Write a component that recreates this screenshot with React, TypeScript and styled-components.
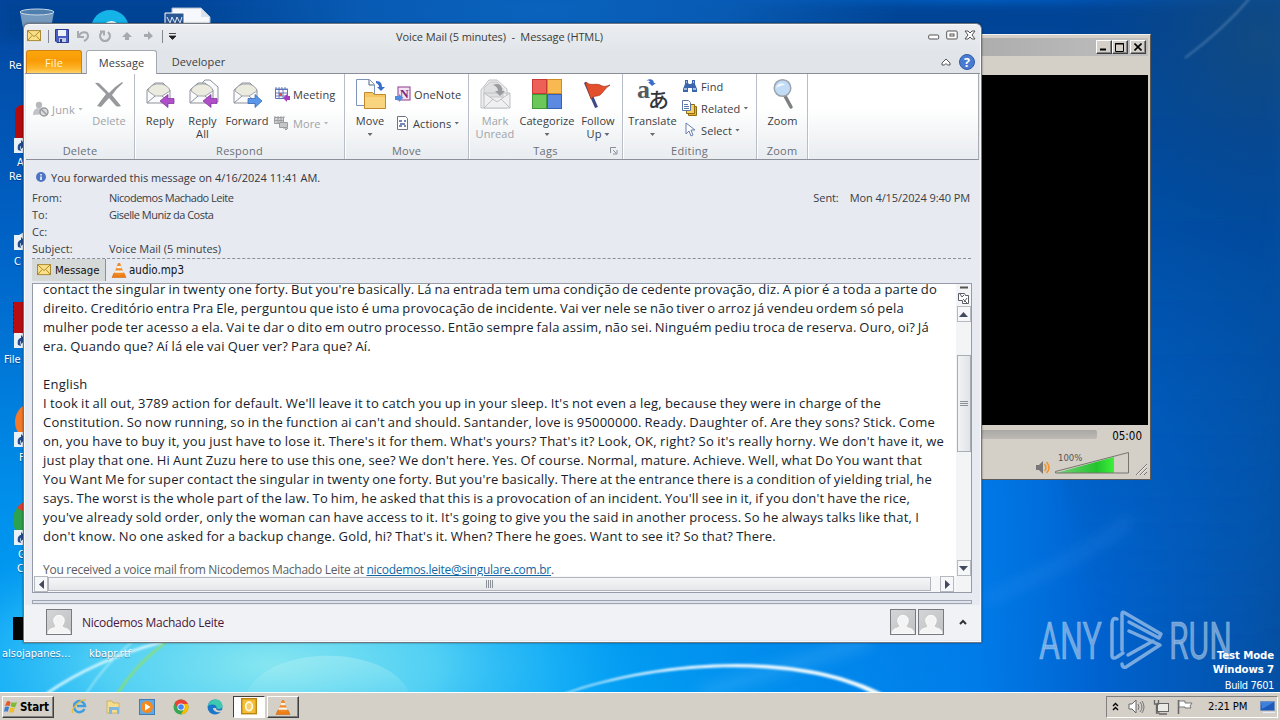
import React from "react";
import styled, { createGlobalStyle, css } from "styled-components";

const Global = createGlobalStyle`
  *{box-sizing:border-box}
  html,body{margin:0;width:1280px;height:720px;overflow:hidden}
  body{font-family:"Open Sans","Noto Sans",sans-serif;font-size:11px;color:#3a3d44;}
  svg{display:block;flex:none}
`;

const Desktop = styled.main`
  position:relative;width:1280px;height:720px;overflow:hidden;background:#0068ce;
  display:flex;flex-direction:column;justify-content:flex-end;
`;
const Wallpaper = styled.svg`position:absolute;inset:0;`;
const DeskItem = styled.div<{ $x: number; $y: number }>`
  position:absolute;left:${p => p.$x}px;top:${p => p.$y}px;white-space:nowrap;
  font:11px/13px "DejaVu Sans Condensed","Liberation Sans",sans-serif;color:#fff;text-shadow:0 1px 1px #0036;
`;
const Watermark = styled.svg`position:absolute;left:1036px;top:606px;`;
const BuildInfo = styled.div`
  position:absolute;right:6px;top:649px;text-align:right;color:#fff;
  font:bold 11.3px/14px "DejaVu Sans Condensed",sans-serif;letter-spacing:-.12px;
  span{display:block;font-weight:400;font-size:11px;line-height:18px;letter-spacing:-.4px}
`;

/* ---------- media player ---------- */
const Player = styled.section`
  position:absolute;left:900px;top:34px;width:251px;height:446px;background:#d4d0c8;padding:3px 2px 3px 3px;
  border:1px solid;border-color:#f4f2ee #5d5b57 #5d5b57 #fff;display:flex;flex-direction:column;
`;
const PlayerTitle = styled.div`
  height:18px;background:linear-gradient(90deg,#a5a5a5,#bfbfbf);display:flex;justify-content:flex-end;align-items:center;padding-right:2px;
`;
const ClassicButton = styled.span<{ $gap?: boolean }>`
  width:16px;height:14px;margin-left:${p => (p.$gap ? 2 : 0)}px;background:#d4d0c8;border:1px solid;border-color:#fff #404040 #404040 #fff;
  box-shadow:inset -1px -1px #858585;display:flex;align-items:center;justify-content:center;
`;
const PlayerMenu = styled.div`height:19px;flex:none;`;
const Screen = styled.div`height:350px;flex:none;background:#000;`;
const SeekRow = styled.div`
  height:22px;display:flex;align-items:center;justify-content:flex-end;padding-right:6px;
  font:11.5px "DejaVu Sans Condensed",sans-serif;color:#000;gap:15px;
`;
const Seek = styled.div`width:190px;height:9px;background:linear-gradient(#aaa8a4,#bebbb6);border-radius:2px;margin-top:-4px;`;
const VolumeRow = styled.div`flex:1;min-height:0;display:flex;justify-content:flex-end;align-items:flex-end;`;

/* ---------- message window ---------- */
const Window = styled.section`
  position:absolute;left:23px;top:23px;width:959px;height:620px;border-radius:6px 6px 0 0;overflow:hidden;
  border:1px solid #6f767f;background:#e7eaf1;box-shadow:inset 0 0 0 1px #f8f9fb,0 0 2px #0008;
  padding:0 2px 2px;display:flex;flex-direction:column;
`;
const TitleBar = styled.header`
  height:26px;flex:none;margin:1px -1px 0;padding:0 0 4px 2px;background:linear-gradient(#ebedf0,#e2e6ea);display:flex;align-items:center;
`;
const QuickAccess = styled.div`width:172px;display:flex;align-items:center;gap:7px;`;
const VLine = styled.i`width:1px;height:13px;background:#85898f;margin:0 -1px 0 0;`;
const Title = styled.h1`
  margin:0;flex:1;font-size:11px;font-weight:400;letter-spacing:-.1px;color:#3b3b3b;padding-left:197px;white-space:nowrap;
`;
const WinButtons = styled.div`display:flex;gap:6px;align-items:center;padding:0 4px 2px 0;`;
const TabRow = styled.nav`
  height:23px;flex:none;margin:0 -1px;background:#e1e5e9;border-bottom:1px solid #8a8f97;display:flex;align-items:flex-end;padding-left:1px;
`;
const Tab = styled.span<{ $kind?: "file" | "active"; $w: number }>`
  width:${p => p.$w}px;height:23px;display:flex;align-items:center;justify-content:center;font-size:11px;letter-spacing:.12px;
  ${p => p.$kind === "file" && css`
    color:#fff4d2;background:linear-gradient(#fba60d,#f99b05 45%,#fdb52a 80%,#ffd267);border:1px solid #d18012;border-bottom:0;border-radius:3px 3px 0 0;margin-right:4px;`}
  ${p => p.$kind === "active" && css`
    background:#fff;border:1px solid #a4a9b0;border-bottom:0;border-radius:3px 3px 0 0;margin-bottom:-1px;height:24px;`}
`;
const TabTools = styled.div`margin-left:auto;display:flex;align-items:center;gap:8px;padding:0 5px 3px 0;`;
const Ribbon = styled.div`
  height:86px;flex:none;background:linear-gradient(#fff 0,#fff 40%,#f5f7f8 65%,#e9ecf0);border-bottom:1px solid #8b9098;
  border-right:1px solid #a9adb4;display:flex;
`;
const Group = styled.div<{ $w: number }>`
  width:${p => p.$w}px;border-right:1px solid #b9bdc5;box-shadow:1px 0 #fff;display:flex;flex-direction:column;flex:none;position:relative;
`;
const Tools = styled.div<{ $pad?: number }>`flex:1;display:flex;padding-left:${p => p.$pad ?? 4}px;`;
const GroupName = styled.div`height:16px;line-height:15px;text-align:center;color:#6a6f78;font-size:11px;letter-spacing:.25px;`;
const Corner = styled.svg`position:absolute;right:4px;bottom:4px;`;
const Big = styled.div<{ $w: number; $off?: boolean }>`
  width:${p => p.$w}px;display:flex;flex-direction:column;align-items:center;padding-top:4px;line-height:13px;letter-spacing:.08px;
  color:${p => (p.$off ? "#a0a3a8" : "#3a3d44")};white-space:nowrap;text-align:center;flex:none;
  svg+span{margin-top:4px}
`;
const Smalls = styled.div<{ $rows: number; $pad?: number }>`
  display:flex;flex-direction:column;padding-top:${p => (p.$rows === 3 ? 1 : 9)}px;gap:${p => (p.$rows === 3 ? 0 : 7)}px;margin-left:${p => p.$pad ?? 4}px;
`;
const Small = styled.div<{ $off?: boolean }>`
  height:22px;display:flex;align-items:center;gap:3px;white-space:nowrap;letter-spacing:.1px;color:${p => (p.$off ? "#a0a3a8" : "#3a3d44")};
`;
const JunkCell = styled.div`
  width:54px;height:22px;margin-top:24px;display:flex;align-items:center;gap:3px;color:#a0a3a8;letter-spacing:.2px;flex:none;
`;
const Arrow = styled.i<{ $off?: boolean; $top?: number }>`
  display:inline-block;width:5px;height:3px;background:${p => (p.$off ? "#b5b8bc" : "#666b73")};clip-path:polygon(0 0,100% 0,50% 100%);
  vertical-align:2px;margin-top:${p => p.$top ?? 0}px;
`;
const InfoBar = styled.div`height:24px;flex:none;margin-top:5px;display:flex;align-items:center;gap:5px;padding-left:10px;font-size:11px;letter-spacing:-.02px;color:#33363d;`;
const Fields = styled.div`padding:0 9px 0 6px;height:69px;flex:none;`;
const Field = styled.div`display:flex;height:17px;line-height:17px;font-size:11px;white-space:pre;
  b{font-weight:400;width:77px}
  em{font-style:normal;margin-left:auto;letter-spacing:-.09px}
  i{font-style:normal;margin-right:11px}
`;
const PersonName = styled.span`letter-spacing:-.5px;`;
const Attachments = styled.div`
  height:25px;flex:none;margin:0 8px 0 6px;border-top:1px dashed #8a919c;display:flex;align-items:flex-start;font:11.5px "DejaVu Sans Condensed",sans-serif;color:#111;
`;
const Attachment = styled.span<{ $on?: boolean }>`
  height:21px;display:flex;align-items:center;gap:2px;padding:0 5px;
  ${p => p.$on && css`height:22px;gap:4px;background:#d5d9d8;border-right:1px solid #8d9196;width:74px;font-size:11.3px;`}
`;
const Reader = styled.div`
  height:310px;flex:none;margin:0 7px 0 6px;border:1px solid #959ca8;background:#fff;display:grid;
  grid-template-columns:1fr 15px;grid-template-rows:1fr 16px;
`;
const Body = styled.article`overflow:hidden;padding-left:10px;color:#171d2b;font-size:13px;letter-spacing:.22px;`;
const Para = styled.div`margin-top:-4px;`;
const Line = styled.div<{ $w?: number }>`
  height:19px;line-height:19px;white-space:nowrap;
  ${p => p.$w && css`width:${p.$w}px;white-space:normal;text-align-last:justify;word-spacing:-3px;`}
`;
const Footer = styled.div`margin-top:15px;line-height:17px;font-size:12px;letter-spacing:-.27px;color:#5a5d62;white-space:nowrap;
  a{color:#1267a3;text-decoration:underline}
`;
const VBar = styled.div`background:#f3f4f6;display:flex;flex-direction:column;align-items:center;`;
const ScrollBtn = styled.span`width:14px;height:16px;flex:none;border:1px solid #b6bac0;background:#f6f7f9;display:flex;align-items:center;justify-content:center;`;
const VThumb = styled.span`
  width:14px;height:97px;margin-top:33px;border:1px solid #a9aeb5;background:linear-gradient(90deg,#f1f3f4,#e1e4e7);
  display:flex;align-items:center;justify-content:center;
`;
const ScrollSpacer = styled.span`flex:1;`;
const HBar = styled.div`background:#f6f7f8;display:flex;align-items:center;padding-left:1px;`;
const HThumb = styled.span`
  width:883px;height:14px;border:1px solid #b1b5bb;background:linear-gradient(#f5f6f7,#e5e7ea);display:flex;align-items:center;justify-content:center;margin-right:9px;
`;
const Splitter = styled.div`height:4px;flex:none;margin:7px 7px 0 6px;border:1px solid #9da3b0;background:#dfe3eb;`;
const People = styled.footer`
  flex:1;background:#f1f2f5;margin:1px -1px 0;padding:0 10px 1px 21px;display:flex;align-items:center;gap:2px;
  font-size:12px;color:#4a1740;
  p{margin:0 auto 0 8px;letter-spacing:-.27px}
`;
const Avatar = styled.span`width:26px;height:26px;border:1px solid #777b80;background:linear-gradient(135deg,#d4d5d6,#bfc1c3);overflow:hidden;display:flex;`;

/* ---------- taskbar ---------- */
const Taskbar = styled.footer`
  position:relative;height:28px;background:#d4d0c8;border-top:1px solid #fff;display:flex;align-items:center;padding:0 2px;
`;
const Start = styled.span`
  width:52px;height:22px;border:1px solid;border-color:#fff #404040 #404040 #fff;box-shadow:inset -1px -1px #808080;display:flex;align-items:center;gap:1px;
  padding-left:1px;font:bold 11.5px "DejaVu Sans Condensed",sans-serif;letter-spacing:-.1px;color:#000;margin-right:8px;
`;
const Launcher = styled.span<{ $mode?: "down" | "up" }>`
  width:${p => (p.$mode ? 32 : 34)}px;height:22px;display:flex;align-items:center;justify-content:center;
  ${p => p.$mode === "down" && css`background:#fff;border:1px solid;border-color:#404040 #fff #fff #404040;margin:0 2px 0 1px;`}
  ${p => p.$mode === "up" && css`border:1px solid;border-color:#fff #404040 #404040 #fff;box-shadow:inset -1px -1px #808080;`}
`;
const Tray = styled.div`
  margin-left:auto;width:172px;height:22px;border:1px solid;border-color:#808080 #fff #fff #808080;display:flex;align-items:center;padding:0 1px 0 5px;gap:8px;
  font:11.2px "DejaVu Sans Condensed",sans-serif;color:#000;letter-spacing:-.2px;
  svg:first-child{margin-right:1px} time{margin:0 auto 0 7px}
`;

/* ---------- drawings ---------- */
const Env = ({ s = 14 }: { s?: number }) => (
  <svg width={s} height={s * 0.8} viewBox="0 0 14 11"><rect x=".5" y=".5" width="13" height="10" fill="#fbe08a" stroke="#a98a35" /><path d="M1 1l6 5.5L13 1M1 10l4-4.5M13 10L9 5.500" fill="none" stroke="#b08a28" /></svg>
);
const OpenMail = ({ kind }: { kind: "reply" | "all" | "fwd" | "unread" }) => {
  const un = kind === "unread";
  const st = un ? "#bfc0c3" : "#8d929b";
  return (
    <svg width="32" height="32" viewBox="0 0 32 32">
      {(kind === "all") && <path d="M12 10V8l6-6h5l8 7v15h-5" fill="#fafbfc" stroke={st} />}
      <path d={un ? "M2 12L10 2h8l10 9v19H2z" : kind === "all" ? "M3 12L11 5h7l8 7v13H3z" : "M3 12L11 5h8l7 7v13H3z"} fill={un ? "#eeeeef" : "#fafbfd"} stroke={st} />
      <path d={un ? "M5 10l6-6h7l6 7v8H5z" : "M4 13q1-5 8-7h6q7 2 8 7l-8 5h-7z"} fill={un ? "#e0e0e2" : "#ecebe0"} stroke={st} strokeWidth=".8" />
      <path d={un ? "M5 15h26v15H5zM5 15l13 9 13-9M5 30l9-9M31 30l-9-9" : "M3 25l8-7M26 25l-8-7"} fill={un ? "#f0f0f1" : "none"} stroke={st} />
      {un && <path d="M14 7c6-3 10 1 9 6h3l-5 5-5-5h3c0-3-2-5-5-6z" fill="#9a9b9e" />}
      {kind === "fwd" && <path d="M17 20.500h7v-4l7 6.500-7 6.500v-4h-7z" fill="#5a97ea" stroke="#2d62b5" strokeWidth=".7" />}
      {(kind === "reply" || kind === "all") && <path d="M30 20.500h-6v-4L16 23l8 6.500v-4h6z" fill="#ae4fc9" stroke="#7c2b98" strokeWidth=".7" />}
    </svg>
  );
};
const XIcon = () => <svg width="32" height="32" viewBox="0 0 32 32"><path d="M2 5q3-1 5 1l9 9Q21 9 29 4l1 1q-6 5-11 12l9 11q-3 1-5 0l-7-8-8 9-4-1 9-12z" fill="#97999c" /></svg>;
const MoveIcon = () => (
  <svg width="32" height="32" viewBox="0 0 32 32"><path d="M2.500 1.500h13l5 5v21h-18z" fill="#fcfdff" stroke="#7e95b8" /><path d="M15 2v5h5" fill="none" stroke="#55667f" />
    <path d="M10.500 14.500h8l2 2h11v14h-21z" fill="#f4c764" stroke="#c08a2c" /><path d="M11 19h20v11H11z" fill="#f9d580" />
    <path d="M22 3c5 0 6 3 6 6h3l-4 4-4-4h2c0-2-1-3-3-4z" fill="#3b6ecb" /></svg>
);
const CatIcon = () => (
  <svg width="32" height="32" viewBox="0 0 32 32"><g strokeWidth="1"><rect x="1.500" y="1.500" width="14" height="14" fill="#ee5f57" stroke="#c73a35" /><rect x="16.500" y="1.500" width="14" height="14" fill="#f8b951" stroke="#cf8a26" />
    <rect x="1.500" y="16.500" width="14" height="14" fill="#6bc75a" stroke="#3f9a37" /><rect x="16.500" y="16.500" width="14" height="14" fill="#5b8ae0" stroke="#3560b5" /></g></svg>
);
const FlagIcon = () => (
  <svg width="32" height="32" viewBox="0 0 32 32"><path d="M2 5l3-1 11 25-3 1z" fill="#3d4a86" /><path d="M3 4c7 5 11 0 17 4 3 1 5 0 8-1-6 4-6 7-10 10-4 2-6 0-9 4z" fill="#e2502d" stroke="#a9341b" strokeWidth=".7" /></svg>
);
const TransIcon = () => (
  <svg width="32" height="32" viewBox="0 0 32 32" overflow="visible"><text x="0" y="20" fontFamily="Liberation Serif,serif" fontWeight="700" fontSize="26" fill="#555a61">a</text>
    <text x="11" y="29" fontFamily="Noto Sans CJK JP,sans-serif" fontWeight="500" fontSize="21" fill="#33363b">あ</text>
    <path d="M9 3c3-3 8-2 8 2h2l-4 3-4-4h2c0-1-2-2-4-1z" fill="#3b6ecb" /></svg>
);
const ZoomIcon = () => (
  <svg width="32" height="32" viewBox="0 0 32 32"><path d="M18 18l6 11" stroke="#7e7f82" strokeWidth="3.500" strokeLinecap="round" /><circle cx="15.500" cy="10" r="8.300" fill="#c3dcf5" stroke="#9aa2ad" strokeWidth="1.500" /><path d="M9 10c1-4 6-6 9-3-4 0-7 2-9 3z" fill="#f4faff" /></svg>
);
const Cone = ({ s = 16 }: { s?: number }) => (
  <svg width={s} height={s} viewBox="0 0 16 16"><path d="M1 15.500l2-4.500h10l2 4.500z" fill="#ee7d15" stroke="#c55e06" strokeWidth=".5" /><path d="M7 1h2l4 11c-2 1.500-8 1.500-10 0z" fill="#f08a24" /><path d="M6 4h4l.8 2.200H5.200zM4.300 8.500h7.400l.8 2.200h-9z" fill="#f2f2f0" /></svg>
);
const Tri = ({ d }: { d: "u" | "d" | "l" | "r" }) => (
  <svg width="9" height="9" viewBox="0 0 9 9"><path d={{ u: "M0 7l4.500-5L9 7z", d: "M0 2l4.500 5L9 2z", l: "M7 0L2 4.500 7 9z", r: "M2 0l5 4.500L2 9z" }[d]} fill="#434a60" /></svg>
);
const Person = () => (
  <Avatar><svg width="24" height="24" viewBox="0 0 24 24"><path d="M1 24c0-5 3-5 7-6.500 1-.5 1-2 0-3-2-3-2-9 4-9s6 6 4 9c-1 1-1 2.500 0 3 4 1.500 7 1.500 7 6.500z" fill="#f4f4f4" stroke="#fff" /></svg></Avatar>
);
const Shortcut = () => <g><rect x="14" y="0" width="15" height="15" fill="#e9f1f8" /><path d="M18 12c-1-5 1-7 3-7V2l5 5-5 4V8c-1 0-1 2 0 5z" fill="#214a8f" /></g>;

const lines: [string, number?][] = [
  ["contact the singular in twenty one forty. But you're basically. Lá na entrada tem uma condição de cedente provação, diz. A pior é a toda a parte do", 894],
  ["direito. Creditório entra Pra Ele, perguntou que isto é uma provocação de incidente. Vai ver nele se não tiver o arroz já vendeu ordem só pela", 861],
  ["mulher pode ter acesso a ela. Vai te dar o dito em outro processo. Então sempre fala assim, não sei. Ninguém pediu troca de reserva. Ouro, oi? Já", 886],
  ["era. Quando que? Aí lá ele vai Quer ver? Para que? Aí.", 328],
  [""],
  ["English"],
  ["I took it all out, 3789 action for default. We'll leave it to catch you up in your sleep. It's not even a leg, because they were in charge of the", 838],
  ["Constitution. So now running, so in the function ai can't and should. Santander, love is 95000000. Ready. Daughter of. Are they sons? Stick. Come", 892],
  ["on, you have to buy it, you just have to lose it. There's it for them. What's yours? That's it? Look, OK, right? So it's really horny. We don't have it, we", 901],
  ["just play that one. Hi Aunt Zuzu here to use this one, see? We don't here. Yes. Of course. Normal, mature. Achieve. Well, what Do You want that", 879],
  ["You Want Me for super contact the singular in twenty one forty. But you're basically. There at the entrance there is a condition of yielding trial, he", 889],
  ["says. The worst is the whole part of the law. To him, he asked that this is a provocation of an incident. You'll see in it, if you don't have the rice,", 867],
  ["you've already sold order, only the woman can have access to it. It's going to give you the said in another process. So he always talks like that, I", 876],
  ["don't know. No one asked for a backup change. Gold, hi? That's it. When? There he goes. Want to see it? So that? There.", 733],
];

const Scene = () => (
  <Wallpaper width="1280" height="720" viewBox="0 0 1280 720">
    <defs>
      <linearGradient id="base" x1="0" y1="0" x2="0" y2="1"><stop offset="0" stopColor="#0346a0" /><stop offset=".35" stopColor="#0064c8" /><stop offset=".7" stopColor="#0090ec" /><stop offset="1" stopColor="#02a6f6" /></linearGradient>
      <linearGradient id="right" x1="0" y1="0" x2="1" y2="0"><stop offset=".45" stopColor="#0072e4" stopOpacity="0" /><stop offset=".76" stopColor="#0078e8" stopOpacity=".9" /><stop offset=".86" stopColor="#0062cf" /><stop offset="1" stopColor="#0450a4" /></linearGradient>
      <linearGradient id="top" x1="0" y1="0" x2="0" y2="1"><stop offset="0" stopColor="#024394" /><stop offset=".35" stopColor="#00489a" stopOpacity=".75" /><stop offset="1" stopColor="#0060c0" stopOpacity="0" /></linearGradient>
      <radialGradient id="corner"><stop offset="0" stopColor="#164c7e" stopOpacity=".8" /><stop offset="1" stopColor="#0a4688" stopOpacity="0" /></radialGradient>
      <radialGradient id="mid"><stop offset="0" stopColor="#0a63bd" /><stop offset=".5" stopColor="#0a60ba" stopOpacity=".8" /><stop offset="1" stopColor="#0a63bd" stopOpacity="0" /></radialGradient>
      <radialGradient id="glow"><stop offset="0" stopColor="#86e6f0" /><stop offset=".45" stopColor="#55d2f4" stopOpacity=".95" /><stop offset=".75" stopColor="#2cbcf8" stopOpacity=".6" /><stop offset="1" stopColor="#14a4f6" stopOpacity="0" /></radialGradient>
      <linearGradient id="dome" x1="0" y1="0" x2="0" y2="1"><stop offset="0" stopColor="#b9f2f4" stopOpacity=".4" /><stop offset="1" stopColor="#b9f2f4" stopOpacity=".1" /></linearGradient>
      <filter id="soft"><feGaussianBlur stdDeviation=".8" /></filter>
      <filter id="haze" x="-50%" y="-50%" width="200%" height="200%"><feGaussianBlur stdDeviation="7" /></filter>
    </defs>
    <rect width="1280" height="720" fill="url(#base)" />
    <rect width="1280" height="720" fill="url(#right)" />
    <path d="M0 0H1280V640H1100L960 60 0 40z" fill="url(#top)" filter="url(#haze)" />
    <ellipse cx="1260" cy="40" rx="200" ry="200" fill="url(#corner)" />
    <ellipse cx="540" cy="10" rx="360" ry="90" fill="url(#mid)" />
    <ellipse cx="270" cy="665" rx="370" ry="150" fill="url(#glow)" />
    <path d="M246 694C268 643 388 643 410 694z" fill="url(#dome)" />
    <path d="M700 694L870 640" stroke="#6cc4fb" strokeOpacity=".25" strokeWidth="12" filter="url(#haze)" />
    <path d="M985 600Q1080 560 1130 520" stroke="#4aa6f4" strokeOpacity=".2" strokeWidth="10" fill="none" filter="url(#haze)" />
    <g fill="none" filter="url(#soft)">
      <path d="M46 694Q95 660 162 642" stroke="#d6f7ff" strokeWidth="2.500" />
      <path d="M86 694Q105 664 132 642" stroke="#b4f0fb" strokeWidth="1.300" />
      <path d="M117 694Q136 664 166 642" stroke="#93e05a" strokeWidth="2" />
      <path d="M1185 58Q1225 28 1250 -2" stroke="#6b96c0" strokeOpacity=".5" strokeWidth="2" />
    </g>
    <path d="M562 694C660 658 800 650 884 694L873 694C800 656 660 661 566 694z" fill="#f2fbff" filter="url(#soft)" />
    <path d="M20 12q17-5 34 0l-3 16H23z" fill="#8ba9c6" fillOpacity=".85" /><ellipse cx="37" cy="12" rx="17" ry="3" fill="#4e7fae" stroke="#c9d9e7" />
    <circle cx="110" cy="29" r="19" fill="#14b3e8" /><path d="M104 24q8-6 14 0z" fill="#fff" />
    <path d="M172 8h29l9 9v12h-38z" fill="#f6f8fb" stroke="#a9b9cf" /><path d="M201 8v9h9" fill="#d9e1ec" /><path d="M165 13h19v12h-19z" fill="#2c5693" stroke="#fff" /><path d="M167 17l3 6 2-6 3 6 2-6 3 6 2-6" stroke="#dce8f7" fill="none" />
    <rect x="15" y="105" width="30" height="46" rx="7" fill="#b30b0b" />
    <g transform="translate(0 138)"><Shortcut /></g>
    <path d="M14 238l20-12v10z" fill="#e7e7ea" /><g transform="translate(0 235)"><Shortcut /></g>
    <path d="M13 302h20v32H13z" fill="#b80e12" /><path d="M13.500 302v32" stroke="#7b0c0c" strokeDasharray="2 2" /><g transform="translate(0 333)"><Shortcut /></g>
    <circle cx="35" cy="422" r="20" fill="#f47a2a" /><g transform="translate(0 432)"><Shortcut /></g>
    <circle cx="33" cy="520" r="20" fill="#2da14b" /><path d="M17 508a20 20 0 0 1 16-8v16z" fill="#e33b2e" /><g transform="translate(0 530)"><Shortcut /></g>
    <rect x="13" y="617" width="20" height="23" fill="#050505" />
  </Wallpaper>
);

const Logo = () => (
  <Watermark width="200" height="72" viewBox="0 0 200 72" fill="#cfe0f3" fillOpacity=".55">
    <text x="3" y="53" fontFamily="Roboto,sans-serif" fontSize="51" textLength="63" lengthAdjust="spacingAndGlyphs" stroke="#cfe0f3" strokeOpacity=".3">ANY</text>
    <text x="133" y="53" fontFamily="Roboto,sans-serif" fontSize="51" textLength="63" lengthAdjust="spacingAndGlyphs" stroke="#cfe0f3" strokeOpacity=".3">RUN</text>
    <g fill="none" stroke="#cfe0f3" strokeOpacity=".58" strokeWidth="3.500" strokeLinejoin="round" strokeLinecap="round">
      <path d="M81 13Q76 11 76 18V49Q76 54 81 51L87 47" /><path d="M86 44V8Q86 5 89 7L125 28 123 32 93 16" /><path d="M93 25L124 39 90 61Q86 62 86 58M92 49L117 35" />
    </g>
  </Watermark>
);

const MediaPlayer = () => (
  <Player>
    <PlayerTitle>
      <ClassicButton><svg width="8" height="8"><path d="M0 6.500h6" stroke="#000" strokeWidth="2" /></svg></ClassicButton>
      <ClassicButton><svg width="10" height="9"><path d="M.5.500h8v8h-8zM0 1h9" fill="none" stroke="#000" /></svg></ClassicButton>
      <ClassicButton $gap><svg width="8" height="8"><path d="M.5.500l7 7M7.500.500l-7 7" stroke="#000" strokeWidth="1.600" /></svg></ClassicButton>
    </PlayerTitle>
    <PlayerMenu />
    <Screen />
    <SeekRow><Seek />05:00</SeekRow>
    <VolumeRow>
      <svg width="114" height="28" viewBox="0 4 114 28">
        <path d="M2 21h3l4-4v13l-4-4H2z" fill="#777" /><path d="M10.500 20q3 4 0 7M12.500 18q5 6 0 11" fill="none" stroke="#f29427" strokeWidth="1.500" />
        <defs><linearGradient id="vol"><stop offset="0" stopColor="#7ad07b" /><stop offset=".7" stopColor="#22c42e" /><stop offset="1" stopColor="#3ef03a" /></linearGradient></defs>
        <path d="M22 29L80 13v16H22z" fill="url(#vol)" /><path d="M21.500 27.500L94.500 8.500v20.500h-73z" fill="none" stroke="#77746f" />
        <text x="24" y="17" fontFamily="DejaVu Sans Condensed,sans-serif" fontSize="9.500" fill="#555">100%</text>
        <path d="M102 31l11-11M106 31l7-7M110 31l3-3" stroke="#777" /><path d="M103 31l10-10M107 31l6-6" stroke="#fff" strokeWidth=".6" />
      </svg>
    </VolumeRow>
  </Player>
);

const RibbonBar = () => (
  <Ribbon>
    <Group $w={109}>
      <Tools $pad={7}>
        <JunkCell>
          <svg width="16" height="16" viewBox="0 0 16 16"><circle cx="6" cy="4" r="3.200" fill="#b6b8bb" /><path d="M0 14q0-7 6-7t7 6z" fill="#c1c3c6" /><circle cx="11" cy="11" r="4" fill="#dcdddf" stroke="#999ba0" strokeWidth="1.500" /><path d="M8 8l6 6" stroke="#999ba0" strokeWidth="1.500" /></svg>
          Junk <Arrow $off />
        </JunkCell>
        <Big $w={44} $off><XIcon /><span>Delete</span></Big>
      </Tools>
      <GroupName>Delete</GroupName>
    </Group>
    <Group $w={210}>
      <Tools>
        <Big $w={42}><OpenMail kind="reply" /><span>Reply</span></Big>
        <Big $w={43}><OpenMail kind="all" /><span>Reply<br />All</span></Big>
        <Big $w={46}><OpenMail kind="fwd" /><span>Forward</span></Big>
        <Smalls $rows={2}>
          <Small><svg width="16" height="16" viewBox="0 0 16 16"><path d="M1.500 3.500h12v9h-12z" fill="#fff" stroke="#5a73b8" /><path d="M1 3h13M2 1v3M5 1v3M8 1v3M11 1v3M2 7h11M2 10h11M5 4v8M9 4v8" stroke="#5a73b8" strokeWidth=".9" /><rect x="5" y="7" width="3" height="3" fill="#d94f4f" /><path d="M16 10h-3V8l-4 4 4 4v-2h3z" fill="#a43cc2" /></svg>Meeting</Small>
          <Small $off><svg width="16" height="16" viewBox="0 0 16 16"><path d="M.5 2.500h9v6h-9z" fill="#d0d2d5" stroke="#9b9da1" /><path d="M1 1v2M4 1v2M7 1v2M10 1v2M1 5.500h8M4 3v5M7 3v5" stroke="#9b9da1" /><path d="M5.500 7.500h8v5h-8z" fill="#c4c6c9" stroke="#9b9da1" /><path d="M9 13h3v2M11 14l1 1 2-2" fill="none" stroke="#9b9da1" /></svg>More <Arrow $off /></Small>
        </Smalls>
      </Tools>
      <GroupName>Respond</GroupName>
    </Group>
    <Group $w={124}>
      <Tools>
        <Big $w={42}><MoveIcon /><span>Move</span><Arrow $top={6} /></Big>
        <Smalls $rows={2}>
          <Small><svg width="16" height="16" viewBox="0 0 16 16"><rect x="3" y="1" width="12" height="13" fill="#f3e3f3" stroke="#8c3a8e" /><text x="5" y="12" fontFamily="Liberation Serif,serif" fontWeight="700" fontSize="12" fill="#7c2480">N</text><path d="M0 10h4V8l4 4-4 4v-2H0z" fill="#4f8de0" /></svg>OneNote</Small>
          <Small><svg width="15" height="16" viewBox="0 0 15 16"><path d="M2.500 1.500h8l2 2v11h-10z" fill="#fff" stroke="#6b7385" /><path d="M4 6h3M4 11h3M9 6h2M9 11h2M5 9h5" stroke="#4b62a0" strokeWidth="1.500" /></svg>Actions <Arrow /></Small>
        </Smalls>
      </Tools>
      <GroupName>Move</GroupName>
    </Group>
    <Group $w={154}>
      <Tools>
        <Big $w={44} $off><OpenMail kind="unread" /><span>Mark<br />Unread</span></Big>
        <Big $w={60}><CatIcon /><span>Categorize</span><Arrow $top={6} /></Big>
        <Big $w={42}><FlagIcon /><span>Follow<br />Up <Arrow /></span></Big>
      </Tools>
      <GroupName>Tags</GroupName>
      <Corner width="8" height="8" viewBox="0 0 8 8"><path d="M.5 6V.500H6M3 3l3 3M7 3v4H3" fill="none" stroke="#8b9098" /></Corner>
    </Group>
    <Group $w={134}>
      <Tools>
        <Big $w={51}><TransIcon /><span>Translate</span><Arrow $top={6} /></Big>
        <Smalls $rows={3}>
          <Small><svg width="16" height="16" viewBox="0 0 16 16"><path d="M3 2h3v3l1 1h2l1-1V2h3v4l2 5v3h-5v-4H6v4H1v-3l2-5z" fill="#3b66ae" /><path d="M2 11h3M11 11h3M4 4h1M11 4h1" stroke="#c5d8f2" strokeWidth="1.500" /></svg>Find</Small>
          <Small><svg width="16" height="16" viewBox="0 0 16 16"><path d="M6.500 6.500h8v9h-8z" fill="#e8b02e" stroke="#8e6a12" /><path d="M4.500 4.500h8v9h-8z" fill="#f6cf62" stroke="#8e6a12" /><path d="M.5.500h6l2 2v8h-8z" fill="#fff" stroke="#5f78ab" /><path d="M2 4.500h4M2 6.500h5M2 8.500h5" stroke="#5f78ab" /></svg>Related <Arrow /></Small>
          <Small><svg width="16" height="16" viewBox="0 0 16 16"><path d="M4 1v11l3-3 2 5 2-1-2-5h4z" fill="#fff" stroke="#6a7fae" /></svg>Select <Arrow /></Small>
        </Smalls>
      </Tools>
      <GroupName>Editing</GroupName>
    </Group>
    <Group $w={51}>
      <Tools $pad={3}><Big $w={45}><ZoomIcon /><span>Zoom</span></Big></Tools>
      <GroupName>Zoom</GroupName>
    </Group>
  </Ribbon>
);

const MessageWindow = () => (
  <Window>
    <TitleBar>
      <QuickAccess>
        <Env /><VLine />
        <svg width="14" height="14" viewBox="0 0 14 14"><path d="M.5.500h13v13H2l-1.500-1.500z" fill="#4a5fc0" stroke="#2c3b8c" /><path d="M3 1h8v6H3z" fill="#eef2fb" /><path d="M4 9h7v4H4z" fill="#c3cbe6" /><path d="M5 10h2v3H5z" fill="#2c3b8c" /></svg>
        <svg width="15" height="14" viewBox="0 0 15 14"><path d="M2 2v6h6M3 7c2-5 9-5 9 0 0 3-2 4-4 5" fill="none" stroke="#a7aaae" strokeWidth="2" /></svg>
        <svg width="15" height="14" viewBox="0 0 15 14"><path d="M4 3c-4 4-1 9 3 9s7-5 3-9M2 2.500h4v4" fill="none" stroke="#a7aaae" strokeWidth="2" /></svg>
        <svg width="14" height="14" viewBox="0 0 14 14"><path d="M7 3l5 5H9v3H5V8H2z" fill="#a7aaae" /></svg>
        <svg width="14" height="14" viewBox="0 0 14 14"><path d="M12 7L7 2v3H3v3h4v3z" fill="#a7aaae" /></svg>
        <VLine /><svg width="7" height="8" viewBox="0 0 7 8"><path d="M0 1.500h7M0 4h7L3.500 7.500z" fill="#222" stroke="#222" strokeWidth=".8" /></svg>
      </QuickAccess>
      <Title>Voice Mail (5 minutes) &nbsp;-&nbsp; Message (HTML)</Title>
      <WinButtons>
        <svg width="12" height="12" viewBox="0 0 12 12"><rect x=".7" y="6" width="10" height="4" rx="1" fill="#fff" stroke="#555" /></svg>
        <svg width="12" height="12" viewBox="0 0 12 12"><rect x=".7" y="2" width="10.500" height="8" rx="1" fill="#fff" stroke="#555" /><rect x="4" y="5" width="4" height="2" fill="none" stroke="#555" /></svg>
        <svg width="12" height="12" viewBox="0 0 12 12"><path d="M1 2h3l2 2 2-2h3L8 6l3 4H8L6 8l-2 2H1l3-4z" fill="#fff" stroke="#555" /></svg>
      </WinButtons>
    </TitleBar>
    <TabRow>
      <Tab $kind="file" $w={56}>File</Tab><Tab $kind="active" $w={71}>Message</Tab><Tab $w={83}>Developer</Tab>
      <TabTools>
        <svg width="10" height="8" viewBox="0 0 10 8"><path d="M1 5l4-4 4 4v2H6.500L5 5.500 3.500 7H1z" fill="#fff" stroke="#555" /></svg>
        <svg width="16" height="16" viewBox="0 0 16 16"><circle cx="8" cy="8" r="7.500" fill="#4a7bd0" stroke="#2f5cac" /><text x="8" y="12.500" textAnchor="middle" fontFamily="Open Sans,sans-serif" fontSize="12.500" fontWeight="700" fill="#fff">?</text></svg>
      </TabTools>
    </TabRow>
    <RibbonBar />
    <InfoBar><svg width="10" height="10" viewBox="0 0 10 10"><circle cx="5" cy="5" r="5" fill="#4b74c4" /><path d="M5 2v1.500M5 4.500v3.500" stroke="#fff" strokeWidth="1.500" /></svg>You forwarded this message on 4/16/2024 11:41 AM.</InfoBar>
    <Fields>
      <Field><b>From:</b><PersonName>Nicodemos Machado Leite</PersonName><em><i>Sent:</i>Mon 4/15/2024 9:40 PM</em></Field>
      <Field><b>To:</b><PersonName>Giselle Muniz da Costa</PersonName></Field>
      <Field><b>Cc:</b></Field>
      <Field><b>Subject:</b>Voice Mail (5 minutes)</Field>
    </Fields>
    <Attachments>
      <Attachment $on><Env />Message</Attachment>
      <Attachment><Cone />audio.mp3</Attachment>
    </Attachments>
    <Reader>
      <Body>
        <Para>{lines.map(([t, w], i) => <Line key={i} $w={w}>{t}</Line>)}</Para>
        <Footer>You received a voice mail from Nicodemos Machado Leite at <a>nicodemos.leite@singulare.com.br</a>.</Footer>
      </Body>
      <VBar>
        <svg width="13" height="22" viewBox="0 0 13 22"><path d="M3 3.500h8" stroke="#555" strokeWidth="2" /><path d="M1.500 9.500h6l1 2h3v8h-6v-3h-4zM3 10l2 3 2-2M6 15l4 4M10 14l-3 4" fill="#fff" stroke="#5a5d66" /></svg>
        <ScrollBtn><Tri d="u" /></ScrollBtn>
        <VThumb><svg width="8" height="8"><path d="M0 1.500h8M0 3.500h8M0 5.500h8" stroke="#80858c" strokeWidth=".9" /></svg></VThumb>
        <ScrollSpacer /><ScrollBtn><Tri d="d" /></ScrollBtn>
      </VBar>
      <HBar>
        <ScrollBtn><Tri d="l" /></ScrollBtn>
        <HThumb><svg width="8" height="8"><path d="M.5 0v8M2.500 0v8M4.500 0v8M6.500 0v8" stroke="#80858c" strokeWidth=".9" /></svg></HThumb>
        <ScrollBtn><Tri d="r" /></ScrollBtn>
      </HBar>
      <VBar />
    </Reader>
    <Splitter />
    <People>
      <Person /><p>Nicodemos Machado Leite</p><Person /><Person />
      <svg width="24" height="8" viewBox="0 0 24 8"><path d="M14 6l3-3 3 3" fill="none" stroke="#333" strokeWidth="2" /></svg>
    </People>
  </Window>
);

const TaskBar = () => (
  <Taskbar>
    <Start><svg width="15" height="16" viewBox="1 0 16 16"><path d="M4 2q2-1 4 1L7 7Q4 6 2 7z" fill="#e4582a" /><path d="M9 3q3 1 6 0l-2 5q-2 1-5-1z" fill="#7dbb35" /><path d="M2 8q2-1 4.500 0L5 13q-2-1-4 0z" fill="#3c7fd0" /><path d="M7.500 8.500q3 1 5 0l-1 5q-3 1-5 0z" fill="#f4bc2a" /></svg>Start</Start>
    <Launcher><svg width="17" height="17" viewBox="0 0 17 17"><path d="M13.500 11a5.500 5.500 0 1 1 .5-3H6" fill="none" stroke="#3d9fdf" strokeWidth="2.500" /><path d="M2 15C-1 12 9 1 15 2" fill="none" stroke="#e9bb3c" strokeWidth="1.300" /></svg></Launcher>
    <Launcher><svg width="17" height="16" viewBox="0 0 17 16"><path d="M2 2h5l1 2h6v10H2z" fill="#f4dd8d" stroke="#c9a548" strokeWidth=".7" /><path d="M4 8h10v7h-2v-4H7v4H4z" fill="#7db7e2" /></svg></Launcher>
    <Launcher><svg width="16" height="16" viewBox="0 0 16 16"><rect x=".5" y=".5" width="15" height="15" fill="#68a7dc" stroke="#3e7db8" /><circle cx="8" cy="8" r="6" fill="#f58a1f" /><path d="M6 4.500l5.500 3.500L6 11.500z" fill="#fff" /></svg></Launcher>
    <Launcher><svg width="16" height="16" viewBox="0 0 16 16"><circle cx="8" cy="8" r="7.500" fill="#34a853" /><path d="M1.500 4.200A7.500 7.500 0 0 1 14.800 5H8L5 9.500z" fill="#ea4335" /><path d="M14.900 5A7.500 7.500 0 0 1 8 15.500L11.300 9.500 10.500 5z" fill="#fbbc05" /><circle cx="8" cy="8" r="3.600" fill="#fff" /><circle cx="8" cy="8" r="2.800" fill="#4285f4" /></svg></Launcher>
    <Launcher><svg width="16" height="16" viewBox="0 0 16 16"><circle cx="8" cy="8" r="7.500" fill="#1a76c9" /><path d="M1 7c1-8 14-9 14.500 0 0 3-4 4-6 2 1-3-4-5-8.500-2z" fill="#3cc9b0" /><path d="M9 9c0 3 4 3 6 2l-1 2c-4 1-8-1-8-4z" fill="#d4d0c8" /></svg></Launcher>
    <Launcher $mode="down"><svg width="16" height="17" viewBox="0 0 16 17"><rect x=".7" y=".7" width="14.600" height="15" fill="#f4bd36" stroke="#bd8412" strokeWidth="1.400" /><ellipse cx="8" cy="8.300" rx="3.300" ry="4.300" fill="#f7cf62" stroke="#fff8df" strokeWidth="1.800" /></svg></Launcher>
    <Launcher $mode="up"><Cone /></Launcher>
    <Tray>
      <svg width="7" height="10" viewBox="0 0 7 10"><path d="M1 4l2.500-2.500L6 4M1 8l2.500-2.500L6 8" fill="none" stroke="#000" strokeWidth="1.400" /></svg>
      <svg width="17" height="16" viewBox="0 0 17 16"><path d="M1 5h3l4-4v13l-4-4H1z" fill="#fff" stroke="#666" /><path d="M10 5q2 3 0 6M12 3q4 5 0 10M14 2q4 6 0 12" fill="none" stroke="#777" /></svg>
      <svg width="16" height="16" viewBox="0 0 16 16"><rect x="4.500" y="4.500" width="11" height="8" fill="#eceae6" stroke="#666" /><path d="M6 15h8M1.500 1v4h4V1M3.500 5v9h3" fill="none" stroke="#666" strokeWidth="1.300" /></svg>
      <svg width="16" height="16" viewBox="0 0 16 16"><path d="M1.500 1v14" stroke="#666" strokeWidth="1.500" /><path d="M2 2h6v2h7l-2 3 1 2H8V8H2z" fill="#fff" stroke="#777" /></svg>
      <time>2:21 PM</time>
      <svg width="16" height="14" viewBox="0 0 16 14"><path d="M.5 1.500h14v9H.500z" fill="#1e58b8" stroke="#6f8fc0" /><path d="M1 2h13L2 9z" fill="#3e82dd" /><path d="M3 12.500h12" stroke="#e8eef8" /></svg>
    </Tray>
  </Taskbar>
);

export default function App() {
  return (
    <Desktop>
      <Global />
      <Scene />
      <DeskItem $x={9} $y={59}>Re</DeskItem>
      <DeskItem $x={17} $y={156}>A</DeskItem>
      <DeskItem $x={9} $y={170}>Re</DeskItem>
      <DeskItem $x={14} $y={255}>C</DeskItem>
      <DeskItem $x={4} $y={353}>File</DeskItem>
      <DeskItem $x={19} $y={451}>F</DeskItem>
      <DeskItem $x={18} $y={548}>G</DeskItem>
      <DeskItem $x={17} $y={562}>C</DeskItem>
      <DeskItem $x={2} $y={647}>alsojapanes…</DeskItem>
      <DeskItem $x={89} $y={647}>kbapr.rtf</DeskItem>
      <Logo />
      <BuildInfo>Test Mode<br />Windows 7<span>Build 7601</span></BuildInfo>
      <MediaPlayer />
      <MessageWindow />
      <TaskBar />
    </Desktop>
  );
}
